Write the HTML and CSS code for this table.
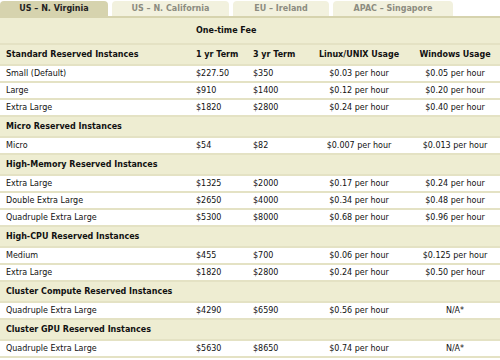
FILE: index.html
```html
<!DOCTYPE html>
<html lang="en">
<head>
    <meta charset="UTF-8">
    <title>Reserved Instances Pricing</title>
    <link rel="stylesheet" href="styles.css">
</head>
<body>
    <ul class="tabs">
        <li class="tab active">US – N. Virginia</li>
        <li class="tab">US – N. California</li>
        <li class="tab">EU – Ireland</li>
        <li class="tab">APAC – Singapore</li>
    </ul>

    <table class="pricing">
        <colgroup>
            <col class="c-name">
            <col class="c-term">
            <col class="c-term3">
            <col class="c-linux">
            <col class="c-win">
        </colgroup>
        <tr class="fee-row">
            <th></th>
            <th colspan="2" class="left">One-time Fee</th>
            <th></th>
            <th></th>
        </tr>
        <tr class="group">
            <th class="left">Standard Reserved Instances</th>
            <th class="left">1 yr Term</th>
            <th class="left">3 yr Term</th>
            <th>Linux/UNIX Usage</th>
            <th>Windows Usage</th>
        </tr>
        <tr><td>Small (Default)</td><td>$227.50</td><td>$350</td><td class="mid">$0.03 per hour</td><td class="mid">$0.05 per hour</td></tr>
        <tr><td>Large</td><td>$910</td><td>$1400</td><td class="mid">$0.12 per hour</td><td class="mid">$0.20 per hour</td></tr>
        <tr><td>Extra Large</td><td>$1820</td><td>$2800</td><td class="mid">$0.24 per hour</td><td class="mid">$0.40 per hour</td></tr>

        <tr class="group"><th class="left">Micro Reserved Instances</th><th></th><th></th><th></th><th></th></tr>
        <tr><td>Micro</td><td>$54</td><td>$82</td><td class="mid">$0.007 per hour</td><td class="mid">$0.013 per hour</td></tr>

        <tr class="group"><th class="left">High-Memory Reserved Instances</th><th></th><th></th><th></th><th></th></tr>
        <tr><td>Extra Large</td><td>$1325</td><td>$2000</td><td class="mid">$0.17 per hour</td><td class="mid">$0.24 per hour</td></tr>
        <tr><td>Double Extra Large</td><td>$2650</td><td>$4000</td><td class="mid">$0.34 per hour</td><td class="mid">$0.48 per hour</td></tr>
        <tr><td>Quadruple Extra Large</td><td>$5300</td><td>$8000</td><td class="mid">$0.68 per hour</td><td class="mid">$0.96 per hour</td></tr>

        <tr class="group"><th class="left">High-CPU Reserved Instances</th><th></th><th></th><th></th><th></th></tr>
        <tr><td>Medium</td><td>$455</td><td>$700</td><td class="mid">$0.06 per hour</td><td class="mid">$0.125 per hour</td></tr>
        <tr><td>Extra Large</td><td>$1820</td><td>$2800</td><td class="mid">$0.24 per hour</td><td class="mid">$0.50 per hour</td></tr>

        <tr class="group"><th class="left">Cluster Compute Reserved Instances</th><th></th><th></th><th></th><th></th></tr>
        <tr><td>Quadruple Extra Large</td><td>$4290</td><td>$6590</td><td class="mid">$0.56 per hour</td><td class="mid">N/A*</td></tr>

        <tr class="group"><th class="left">Cluster GPU Reserved Instances</th><th></th><th></th><th></th><th></th></tr>
        <tr><td>Quadruple Extra Large</td><td>$5630</td><td>$8650</td><td class="mid">$0.74 per hour</td><td class="mid">N/A*</td></tr>
    </table>
</body>
</html>
```

FILE: styles.css
```css
body {
    margin: 0;
    padding: 0;
    background-color: #fff;
    font-family: "DejaVu Sans", Verdana, sans-serif;
    font-size: 8px;
    color: #111;
}

/* region tabs */
.tabs {
    list-style-type: none;
    margin: 0;
    padding: 1px 0 0 0;
    display: flex;
    gap: 4px;
    border-bottom: 2px solid #d6d3ae;
}

.tab {
    height: 15px;
    line-height: 15px;
    padding: 0 10px;
    border-radius: 4px 4px 0 0;
    background-color: #f2f1de;
    color: #8c8c80;
    font-weight: bold;
    text-align: center;
}

.tab:nth-child(1) { width: 88px; }
.tab:nth-child(2) { width: 97px; }
.tab:nth-child(3) { width: 76px; }
.tab:nth-child(4) { width: 100px; }

.tab.active {
    background-color: #d6d3ae;
    color: #222;
}

/* pricing table */
.pricing {
    width: 500px;
    border-collapse: collapse;
    table-layout: fixed;
}

.c-name { width: 190px; }
.c-term { width: 57px; }
.c-term3 { width: 61px; }
.c-linux { width: 102px; }
.c-win { width: 90px; }

.pricing th,
.pricing td {
    padding: 0 6px;
    white-space: nowrap;
    border-bottom: 2px solid #e4e2c4;
}

.pricing th {
    background-color: #eeedd2;
    font-weight: bold;
    height: 19px;
    text-align: center;
}

.pricing td {
    height: 15px;
    background-color: #fff;
}

.pricing .fee-row th {
    height: 25px;
}

.pricing .left {
    text-align: left;
}

.pricing .mid {
    text-align: center;
}
```
